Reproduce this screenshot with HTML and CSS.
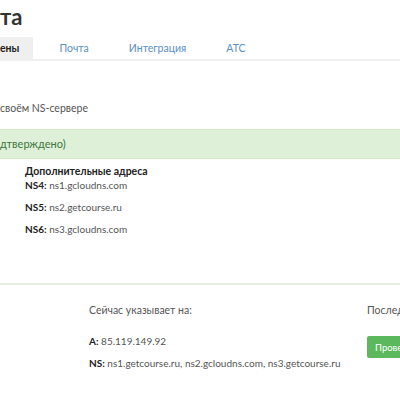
FILE: index.html
```html
<!DOCTYPE html>
<html lang="ru">
<head>
<meta charset="utf-8">
<link rel="stylesheet" href="styles.css">
</head>
<body>
<div class="page">
  <h1 class="title">та</h1>
  <nav class="tabs">
    <span class="tab active">ены</span>
    <span class="tab">Почта</span>
    <span class="tab">Интеграция</span>
    <span class="tab">АТС</span>
  </nav>
  <p class="intro">своём NS-сервере</p>
  <div class="alert">дтверждено)</div>
  <div class="extra">
    <div class="extra-head">Дополнительные адреса</div>
    <div class="ns-line first"><b>NS4:</b> ns1.gcloudns.com</div>
    <div class="ns-line"><b>NS5:</b> ns2.getcourse.ru</div>
    <div class="ns-line"><b>NS6:</b> ns3.gcloudns.com</div>
  </div>
  <div class="divider"></div>
  <div class="status">
    <div class="col current">
      <div class="label">Сейчас указывает на:</div>
      <div class="rec a"><b>A:</b> 85.119.149.92</div>
      <div class="rec"><b>NS:</b> ns1.getcourse.ru, ns2.gcloudns.com, ns3.getcourse.ru</div>
    </div>
    <div class="col last">
      <div class="label">Последняя проверка</div>
      <button class="btn">Проверить</button>
    </div>
  </div>
</div>
</body>
</html>
```

FILE: styles.css
```css
html, body {
  margin: 0;
  padding: 0;
  background: #fff;
  overflow: hidden;
}
body {
  font-family: "Lato", "Open Sans", sans-serif;
  font-size: 10px;
  color: #555;
  width: 400px;
  height: 400px;
}
.page {
  width: 400px;
  overflow: hidden;
}
.title {
  margin: 0;
  padding-top: 3px;
  font-size: 22px;
  line-height: 28px;
  font-weight: 700;
  color: #333;
  height: 37px;
  box-sizing: border-box;
}
.tabs {
  display: flex;
  border-bottom: 2px solid #f0f0f0;
  height: 22px;
}
.tab {
  display: flex;
  align-items: center;
  padding: 0 14px;
  margin-right: 12px;
  color: #5b8ec4;
  font-size: 10.5px;
}
.tab.active {
  padding-left: 0;
  padding-right: 14px;
  background: #efefef;
  color: #222;
  font-weight: 700;
}
.intro {
  margin: 40px 0 0;
  line-height: 14px;
  font-size: 10.5px;
  color: #555;
}
.alert {
  margin-top: 14px;
  height: 28px;
  line-height: 28px;
  background: #dff0d8;
  border-top: 1px solid #d6e9c6;
  border-bottom: 1px solid #d6e9c6;
  color: #3c763d;
  font-size: 11px;
}
.extra {
  padding-left: 25px;
  margin-top: 5px;
}
.extra-head {
  font-weight: 700;
  color: #222;
  line-height: 14px;
  font-size: 10.5px;
}
.ns-line {
  line-height: 14px;
  margin-top: 8px;
}
.ns-line.first {
  margin-top: 0;
}
.ns-line b, .rec b {
  color: #222;
}
.divider {
  margin-top: 47px;
  border-top: 2px solid #e6efe0;
}
.status {
  display: flex;
  padding-top: 18px;
}
.col.current {
  margin-left: 89px;
  width: 278px;
  flex-shrink: 0;
}
.label {
  line-height: 14px;
  font-size: 10.5px;
}
.rec {
  line-height: 14px;
  margin-top: 8px;
  white-space: nowrap;
}
.rec.a {
  margin-top: 17px;
}
.col.last {
  white-space: nowrap;
}
.btn {
  display: block;
  margin-top: 19px;
  height: 22px;
  padding: 0 8px;
  border: none;
  border-radius: 2px;
  background: #5cb85c;
  color: #fff;
  font-family: inherit;
  font-size: 9.5px;
}
```
